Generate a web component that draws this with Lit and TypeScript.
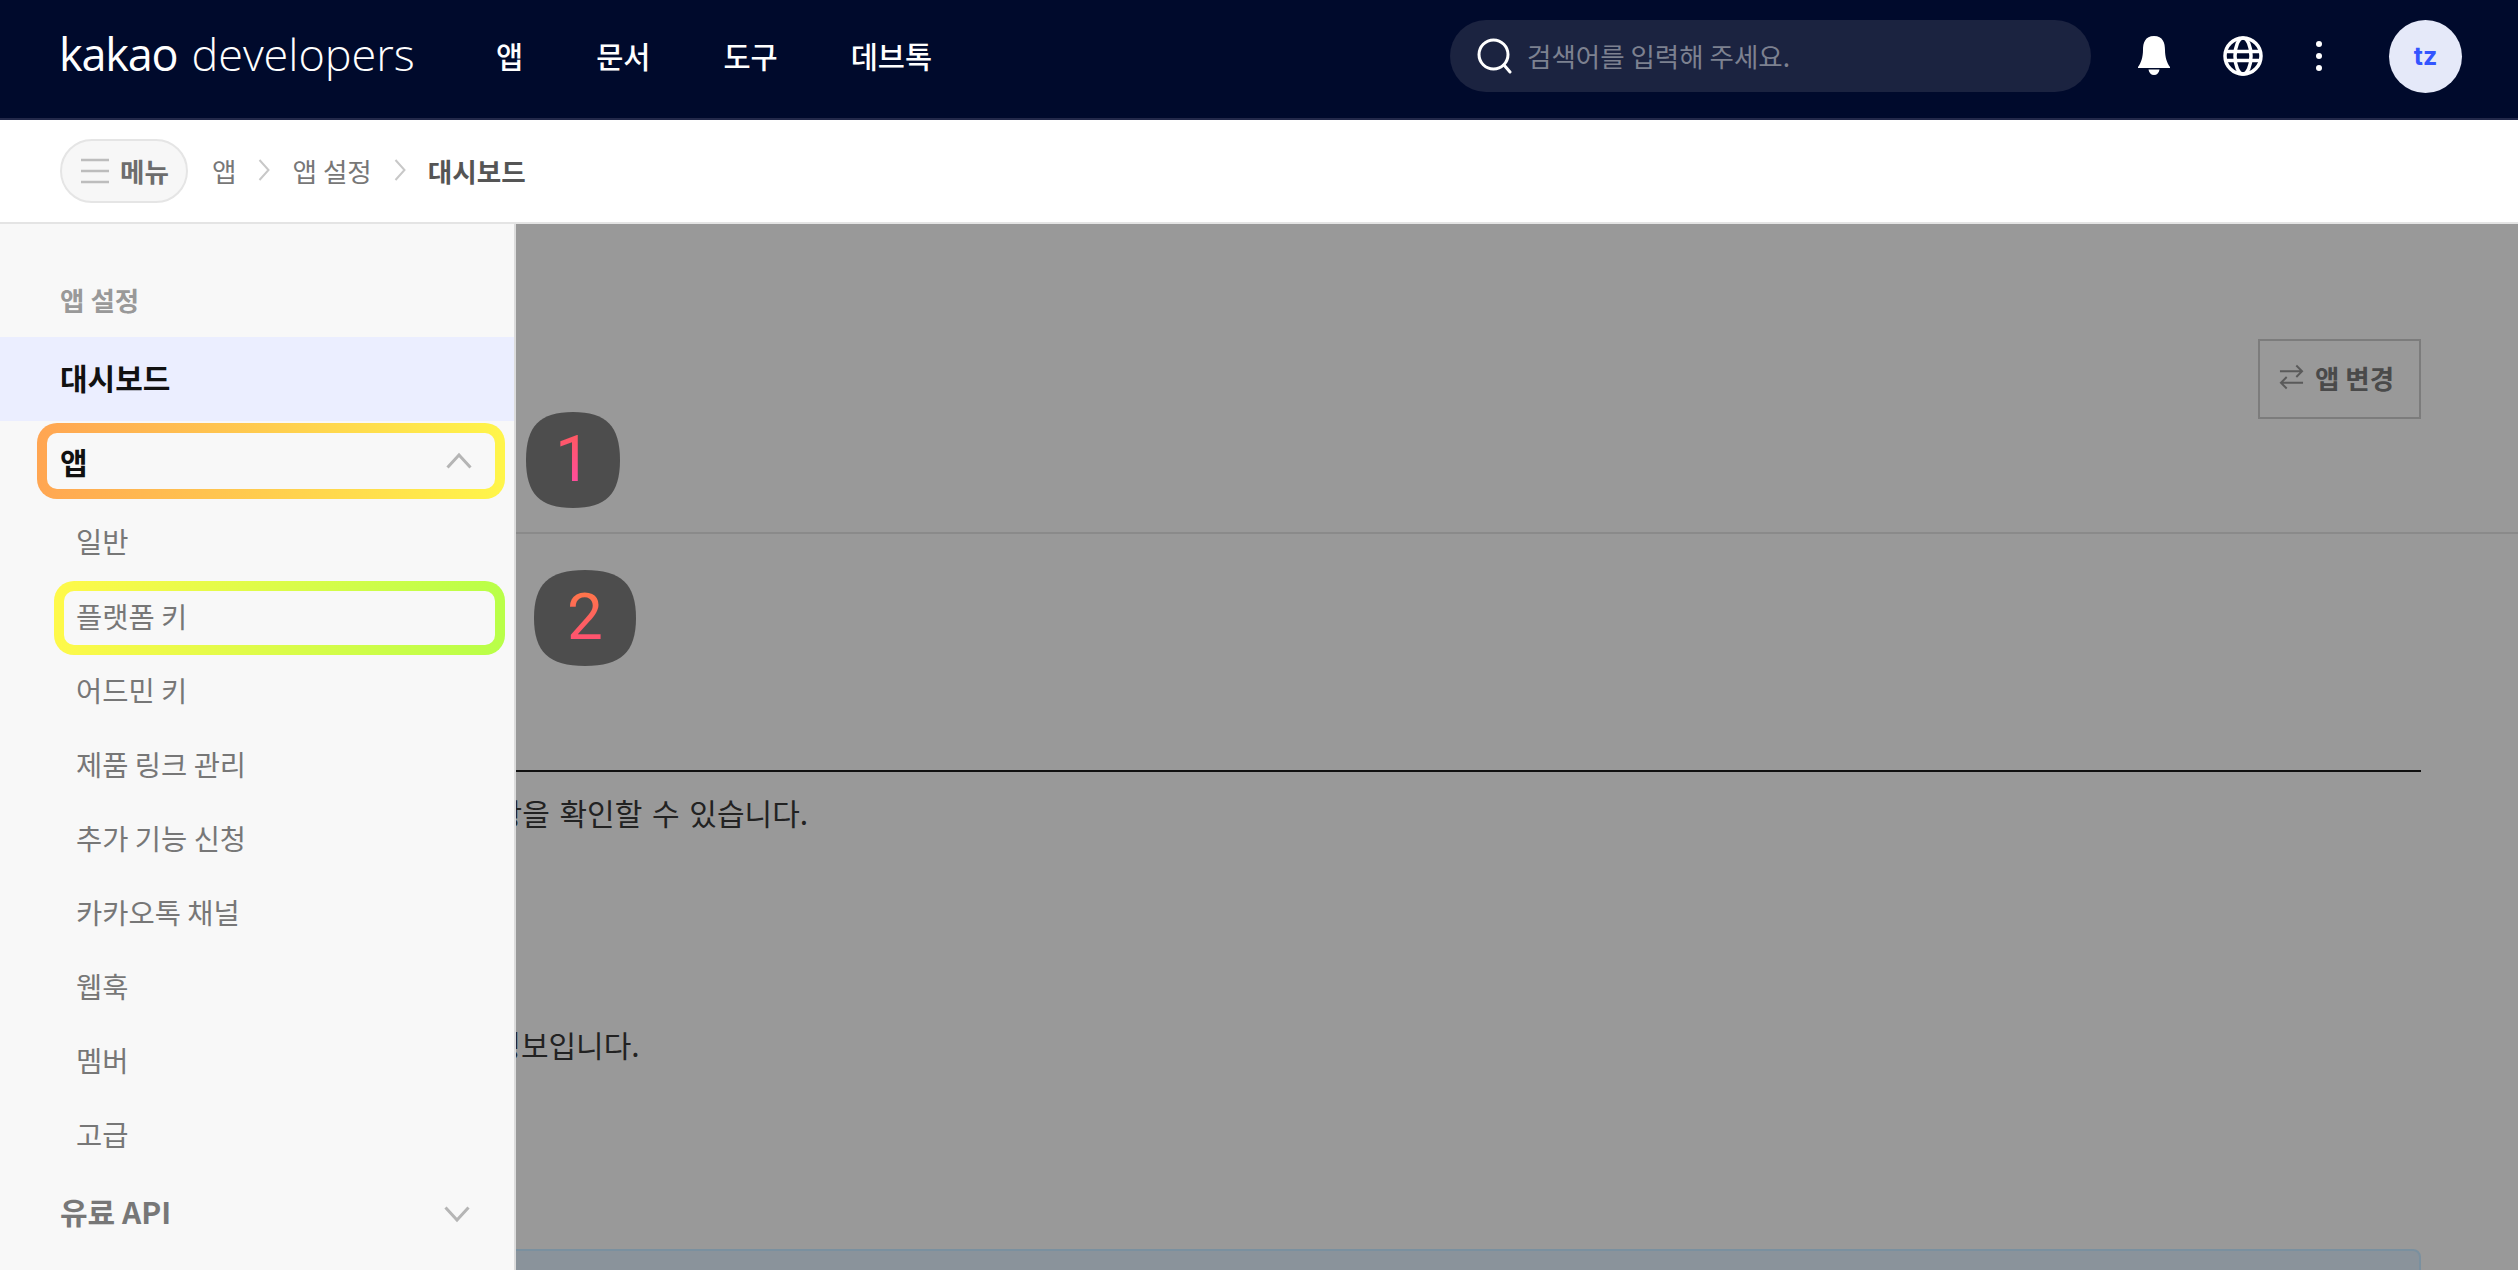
import { LitElement, html, css } from "lit";
import { customElement } from "lit/decorators.js";

@customElement("app-root")
export class AppRoot extends LitElement {
  static styles = css`
    :host { display: block; width: 2518px; height: 1270px; overflow: hidden; position: relative;
      font-family: "Noto Sans CJK KR", "Noto Sans", sans-serif; background: #999; }
    * { box-sizing: border-box; }
    svg { display: block; flex: none; }
    .top { height: 120px; background: #000a2c; border-bottom: 2px solid #23294a; display: flex; align-items: center;
      padding: 0 54px 6px 59px; color: #fff; }
    .logo { width: 357px; font-family: "Open Sans", sans-serif; font-size: 45px; font-weight: 300; line-height: 60px; white-space: nowrap; display: flex; gap: 14px; padding-bottom: 5px; }
    .logo b { font-weight: 400; letter-spacing: -1.2px; }
    .logo i { font-style: normal; font-weight: 300; letter-spacing: 0; }
    .nav { margin-left: 80px; display: flex; gap: 73px; font-size: 29.5px; font-weight: 500; width: 954px; line-height: 40px; padding-bottom: 3px; }
    .search { width: 641px; height: 72px; border-radius: 36px; background: #1b2340; display: flex; align-items: center; padding-left: 27px; gap: 14px; font-size: 26.5px; color: #7d8190; }
    .search span { padding-bottom: 2px; }
    .ic { margin-left: 46px; }
    .ic2 { margin-left: 52px; }
    .ic3 { margin-left: 52px; }
    .avatar { margin-left: 66px; width: 73px; height: 73px; border-radius: 50%; background: #e5e9f9; color: #3355ff; font-family: "Inter", sans-serif; font-size: 25px; font-weight: 700; display: flex; align-items: center; justify-content: center; }
    .sub { height: 104px; background: #fff; border-bottom: 2px solid #e4e4e4; display: flex; align-items: center; padding: 0 0 2px 60px; font-size: 26.6px; color: #777; }
    .menu { width: 128px; height: 64px; border-radius: 32px; border: 2px solid #e5e5e5; background: #f7f7f7; display: flex; align-items: center; padding-left: 18px; gap: 10px; font-weight: 700; margin: 2px 24px 0 0; color: #6d6d6d; }
    .menu span { padding-bottom: 2px; }
    .sep { margin: 0 22px; }
    .crumb-now { font-weight: 700; color: #555; }
    .main { height: 1046px; color: #222; font-size: 30px; }
    .head { height: 310px; padding: 115px 97px 0 0; border-bottom: 2px solid #8a8a8a; display: flex; justify-content: flex-end; align-items: flex-start; }
    .swap { width: 163px; height: 80px; border: 2px solid #7c7c7c; display: flex; align-items: center; justify-content: center; gap: 11px; font-size: 26.5px; font-weight: 700; color: #4a4a4a; padding: 0 6px 4px 0; }
    .body { padding: 236px 97px 0 0; margin-left: 60px; }
    .rule { height: 2px; background: #111; }
    .line { white-space: nowrap; line-height: 40px; word-spacing: 3px; }
    .l1 { margin-top: 20px; margin-left: 407px; }
    .l2 { margin-top: 192px; margin-left: 396px; }
    .callout { margin-top: 185px; height: 120px; background: #8a939b; border: 2px solid #7a909f; border-radius: 8px; }
    .side { position: absolute; left: 0; top: 224px; width: 516px; height: 1046px; background: #f8f8f8; border-right: 2px solid #dcdcdc; font-size: 28.5px; color: #777; }
    .cap { height: 113px; padding: 57px 0 0 60px; font-size: 26.5px; font-weight: 700; color: #999; line-height: 38px; }
    .dash { height: 84px; background: #ebeeff; display: flex; align-items: center; padding: 0 0 4px 60px; font-size: 30px; font-weight: 700; color: #111; }
    .hl { margin: 2px 9px 0 37px; height: 76px; border: 10px solid transparent; border-radius: 20px; display: flex; align-items: center; justify-content: space-between; padding: 0 23px 0 13px; font-size: 30px; font-weight: 700; color: #111;
      background: linear-gradient(#f8f8f8, #f8f8f8) padding-box, linear-gradient(95deg, #ffa552, #fff64a) border-box; }
    .item { height: 74px; display: flex; align-items: center; padding-left: 76px; line-height: 40px; }
    .hl2 { margin: 3px 9px -2px 54px; height: 74px; border: 10px solid transparent; border-radius: 20px; padding: 0 0 4px 12px; display: flex; align-items: center; line-height: 40px;
      background: linear-gradient(#f8f8f8, #f8f8f8) padding-box, linear-gradient(95deg, #fff94a, #b8ff48) border-box; }
    .paid { height: 80px; display: flex; align-items: center; justify-content: space-between; padding: 0 44px 0 60px; font-size: 30px; font-weight: 700; color: #777; }
    .paid svg { margin-top: 6px; }
    .first { margin-top: 5px; }
    .badge { position: absolute; background: #4d4d4d; display: flex; align-items: center; justify-content: center; font-family: "Roboto", sans-serif; font-weight: 400; font-size: 64px; line-height: 1; }
    .badge span { background-clip: text; -webkit-background-clip: text; color: transparent; }
    .b1 { left: 526px; top: 412px; width: 94px; height: 96px; clip-path: path("M47 0C80 0 94 14 94 48C94 82 80 96 47 96C14 96 0 82 0 48C0 14 14 0 47 0Z"); }
    .b1 span { background-image: linear-gradient(180deg, #ff5a5a, #ff4aa8); }
    .b2 { left: 534px; top: 570px; width: 102px; height: 96px; clip-path: path("M51 0C87 0 102 14 102 48C102 82 87 96 51 96C15 96 0 82 0 48C0 14 15 0 51 0Z"); }
    .b2 span { background-image: linear-gradient(180deg, #ff7a45, #ff4a78); }
  `;

  render() {
    const chev = (up: boolean) => html`<svg width="26" height="18" viewBox="0 0 26 18" fill="none" stroke="#b5b5b5" stroke-width="3"><path d="${up ? "M1.5 15.5 13 3l11.5 12.5" : "M1.5 2.5 13 15 24.5 2.5"}"/></svg>`;
    const sep = html`<svg class="sep" width="12" height="24" viewBox="0 0 12 24" fill="none" stroke="#c8c8c8" stroke-width="2"><path d="M1.5 2 10.5 12 1.5 22"/></svg>`;
    return html`
      <div class="top">
        <div class="logo"><b>kakao</b><i>developers</i></div>
        <div class="nav"><span>앱</span><span>문서</span><span>도구</span><span>데브톡</span></div>
        <div class="search">
          <svg width="36" height="36" viewBox="0 0 36 36" fill="none" stroke="#fff" stroke-width="3"><circle cx="16.5" cy="16.5" r="14.5"/><path d="M27 27l6 7" stroke-linecap="round"/></svg>
          <span>검색어를 입력해 주세요.</span>
        </div>
        <svg class="ic" width="34" height="40" viewBox="0 0 34 40" fill="#fff"><path d="M17 0C8 0 6 7 6 14C6 21 4 27 1 31V32H33V31C30 27 28 21 28 14C28 7 26 0 17 0Z"/><path d="M11.5 33.500H22.500C22 37 20 39 17 39C14 39 12 37 11.500 33.500Z"/></svg>
        <svg class="ic2" width="40" height="40" viewBox="0 0 40 40" fill="none" stroke="#fff" stroke-width="3.500"><circle cx="20" cy="20" r="18"/><ellipse cx="20" cy="20" rx="8" ry="18"/><path d="M3 15.500h34M3 24.500h34"/></svg>
        <svg class="ic3" width="8" height="32" viewBox="0 0 8 32" fill="#fff"><circle cx="4" cy="4" r="3"/><circle cx="4" cy="16" r="3"/><circle cx="4" cy="28" r="3"/></svg>
        <div class="avatar">tz</div>
      </div>
      <div class="sub">
        <div class="menu">
          <svg width="30" height="26" viewBox="0 0 30 26" stroke="#bdbdbd" stroke-width="2.4"><path d="M1 2h28M1 13h28M1 24h28"/></svg>
          <span>메뉴</span>
        </div>
        <span>앱</span>${sep}<span>앱 설정</span>${sep}<span class="crumb-now">대시보드</span>
      </div>
      <div class="main">
        <div class="head">
          <div class="swap">
            <svg width="25" height="28" viewBox="0 0 26 28" fill="none" stroke="#5a5a5a" stroke-width="2"><path d="M1 8h23M18 2l6 6-6 6M25 20H2M8 14l-6 6 6 6"/></svg>
            <span>앱 변경</span>
          </div>
        </div>
        <div class="body">
          <div class="rule"></div>
          <div class="line l1">사항을 확인할 수 있습니다.</div>
          <div class="line l2">앱 정보입니다.</div>
          <div class="callout"></div>
        </div>
      </div>
      <div class="side">
        <div class="cap">앱 설정</div>
        <div class="dash">대시보드</div>
        <div class="hl"><span>앱</span>${chev(true)}</div>
        <div class="item first">일반</div>
        <div class="hl2">플랫폼 키</div>
        <div class="item">어드민 키</div>
        <div class="item">제품 링크 관리</div>
        <div class="item">추가 기능 신청</div>
        <div class="item">카카오톡 채널</div>
        <div class="item">웹훅</div>
        <div class="item">멤버</div>
        <div class="item">고급</div>
        <div class="paid"><span>유료 API</span>${chev(false)}</div>
      </div>
      <div class="badge b1"><span>1</span></div>
      <div class="badge b2"><span>2</span></div>
    `;
  }
}
